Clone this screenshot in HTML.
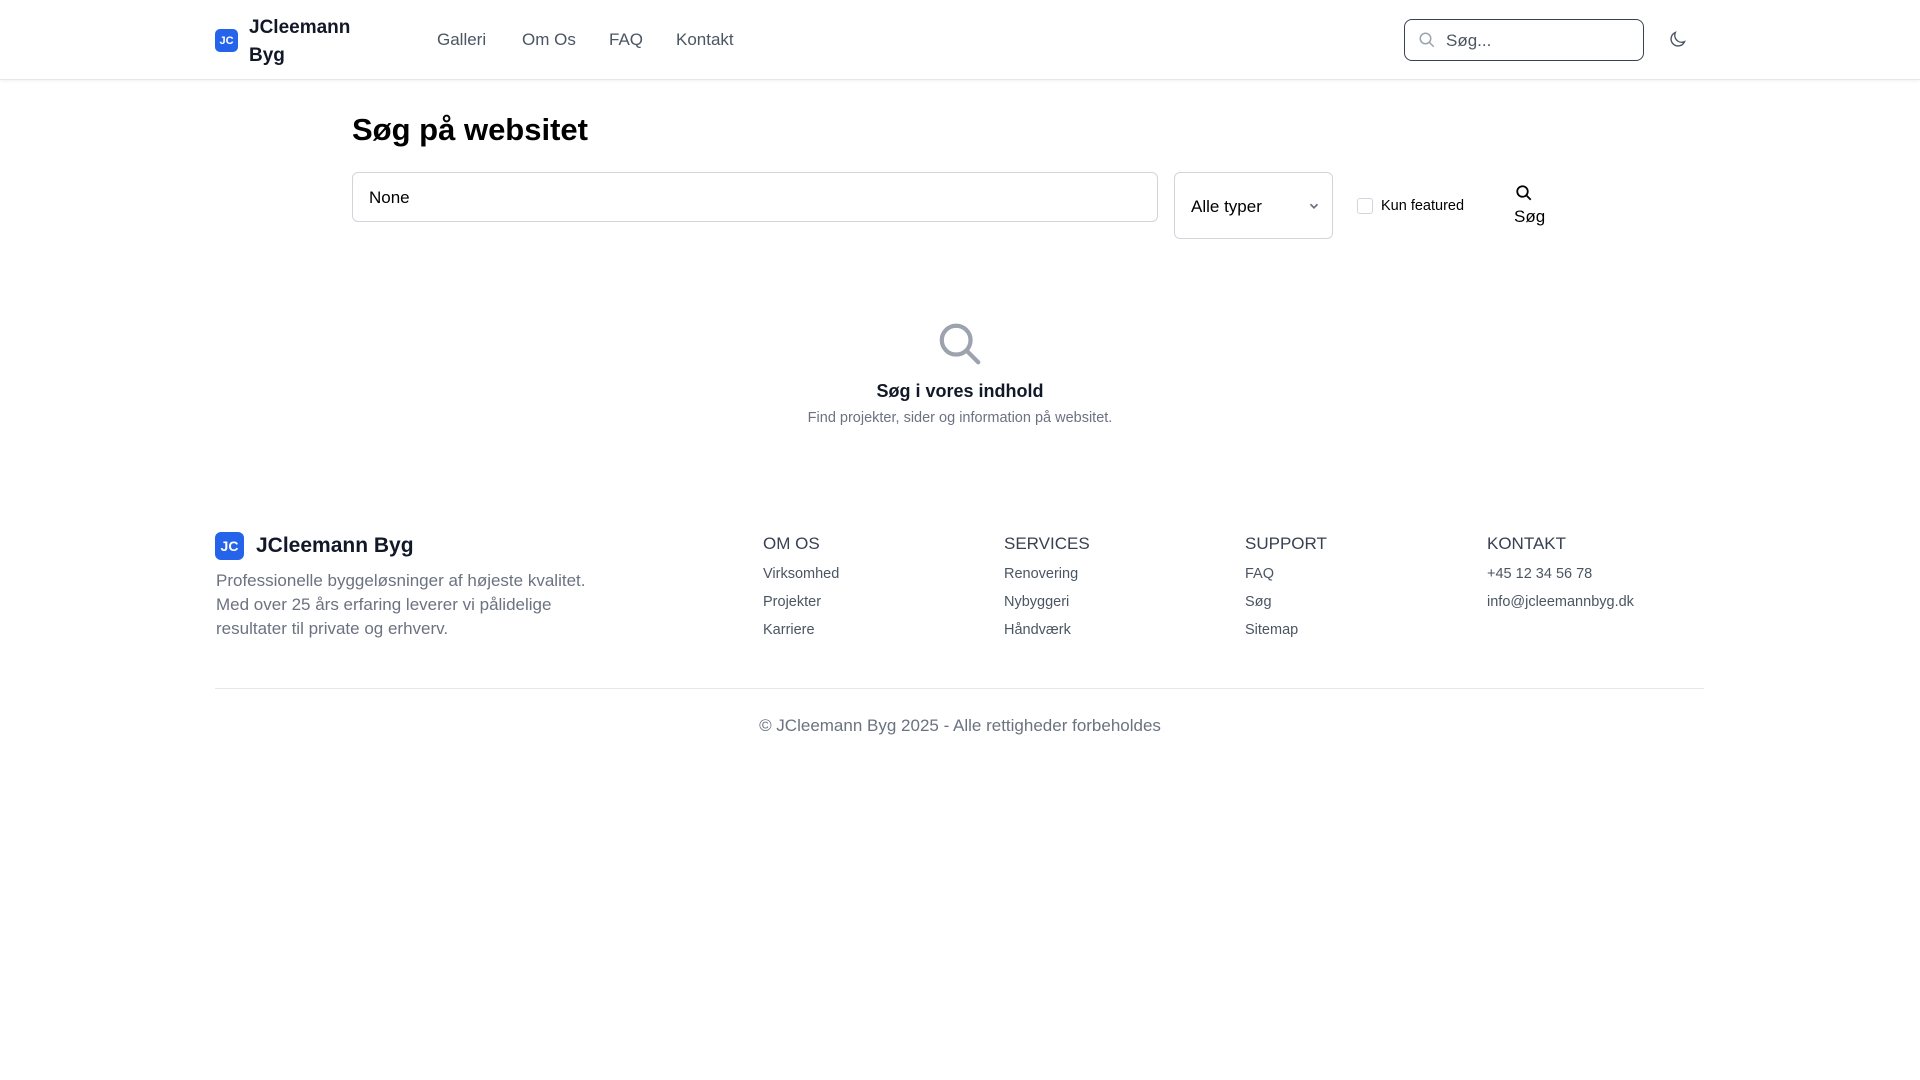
<!DOCTYPE html>
<html><head><meta charset="utf-8"><style>
*{box-sizing:border-box;margin:0;padding:0}
body{width:1920px;height:1080px;background:#fff;font-family:"Liberation Sans",sans-serif;color:#111827;position:relative;overflow:hidden}
.a{position:absolute;white-space:nowrap}
.badge{background:#2563eb;color:#fff;font-weight:bold;display:flex;align-items:center;justify-content:center;border-radius:5px}
.nav{font-size:17px;color:#4b5563;top:30px}
.fh{font-size:17px;color:#374151;top:534px}
.fl{font-size:14.5px;color:#4b5563}
</style></head><body>
<div class="a" style="left:0;top:0;width:1920px;height:80px;border-bottom:1px solid #e5e7eb;box-shadow:0 1px 3px rgba(0,0,0,.06)"></div>
<div class="a badge" style="left:215px;top:29px;width:23px;height:23px;font-size:11px">JC</div>
<div class="a" style="left:249px;top:14px;font-size:19px;font-weight:bold;line-height:28px;white-space:normal;width:110px">JCleemann Byg</div>
<div class="a nav" style="left:437px">Galleri</div>
<div class="a nav" style="left:522px">Om Os</div>
<div class="a nav" style="left:609px">FAQ</div>
<div class="a nav" style="left:676px">Kontakt</div>
<div class="a" style="left:1404px;top:19px;width:240px;height:42px;border:1.5px solid #374151;border-radius:8px"></div>
<svg class="a" style="left:1418px;top:31px" width="18" height="18" viewBox="0 0 24 24" fill="none" stroke="#9ca3af" stroke-width="2"><circle cx="10" cy="10" r="7"/><path d="M15 15l6 6"/></svg>
<div class="a" style="left:1446px;top:31px;font-size:17px;color:#4b5563">Søg...</div>
<svg class="a" style="left:1667px;top:29px" width="21" height="21" viewBox="0 0 24 24" fill="none" stroke="#4b5563" stroke-width="1.6"><path d="M20 14.5A8 8 0 0 1 9.5 4a8 8 0 1 0 10.5 10.5z"/></svg>

<div class="a" style="left:352px;top:112px;font-size:31px;font-weight:bold;color:#000">Søg på websitet</div>
<div class="a" style="left:352px;top:172px;width:806px;height:50px;border:1px solid #d1d5db;border-radius:6px"></div>
<div class="a" style="left:369px;top:188px;font-size:17px;color:#000">None</div>
<div class="a" style="left:1174px;top:172px;width:159px;height:67px;border:1px solid #d1d5db;border-radius:6px"></div>
<div class="a" style="left:1191px;top:197px;font-size:17px;color:#000">Alle typer</div>
<svg class="a" style="left:1307px;top:199px" width="14" height="14" viewBox="0 0 24 24" fill="none" stroke="#6b7280" stroke-width="3"><path d="M6 9l6 6 6-6"/></svg>
<div class="a" style="left:1357px;top:198px;width:16px;height:16px;border:1px solid #d1d5db;border-radius:3px"></div>
<div class="a" style="left:1381px;top:198px;font-size:14.5px;color:#000">Kun featured</div>
<svg class="a" style="left:1515px;top:184px" width="18" height="18" viewBox="0 0 24 24" fill="none" stroke="#000" stroke-width="2.4"><circle cx="10" cy="10" r="7"/><path d="M15 15l6 6"/></svg>
<div class="a" style="left:1514px;top:207px;font-size:17px;color:#000">Søg</div>

<svg class="a" style="left:937px;top:321px" width="46" height="46" viewBox="0 0 24 24" fill="none" stroke="#9ca3af" stroke-width="2.2" stroke-linecap="round"><circle cx="10" cy="10" r="7.5"/><path d="M15.5 15.5l6 6"/></svg>
<div class="a" style="left:0;width:1920px;text-align:center;top:381px;font-size:18px;font-weight:bold;color:#111827">Søg i vores indhold</div>
<div class="a" style="left:0;width:1920px;text-align:center;top:410px;font-size:14.5px;color:#6b7280">Find projekter, sider og information på websitet.</div>

<div class="a badge" style="left:215px;top:532px;width:29px;height:28px;font-size:14px;border-radius:6px">JC</div>
<div class="a" style="left:256px;top:534px;font-size:21px;font-weight:bold">JCleemann Byg</div>
<div class="a" style="left:216px;top:569px;font-size:17px;line-height:24px;color:#6b7280;white-space:normal;width:400px">Professionelle byggeløsninger af højeste kvalitet. Med over 25 års erfaring leverer vi pålidelige resultater til private og erhverv.</div>
<div class="a fh" style="left:763px">OM OS</div>
<div class="a fh" style="left:1004px">SERVICES</div>
<div class="a fh" style="left:1245px">SUPPORT</div>
<div class="a fh" style="left:1487px">KONTAKT</div>
<div class="a fl" style="left:763px;top:566px">Virksomhed</div>
<div class="a fl" style="left:763px;top:594px">Projekter</div>
<div class="a fl" style="left:763px;top:622px">Karriere</div>
<div class="a fl" style="left:1004px;top:566px">Renovering</div>
<div class="a fl" style="left:1004px;top:594px">Nybyggeri</div>
<div class="a fl" style="left:1004px;top:622px">Håndværk</div>
<div class="a fl" style="left:1245px;top:566px">FAQ</div>
<div class="a fl" style="left:1245px;top:594px">Søg</div>
<div class="a fl" style="left:1245px;top:622px">Sitemap</div>
<div class="a fl" style="left:1487px;top:566px">+45 12 34 56 78</div>
<div class="a fl" style="left:1487px;top:594px">info@jcleemannbyg.dk</div>
<div class="a" style="left:215px;top:688px;width:1489px;height:1px;background:#e5e7eb"></div>
<div class="a" style="left:0;width:1920px;text-align:center;top:716px;font-size:17px;color:#6b7280">© JCleemann Byg 2025 - Alle rettigheder forbeholdes</div>
</body></html>
